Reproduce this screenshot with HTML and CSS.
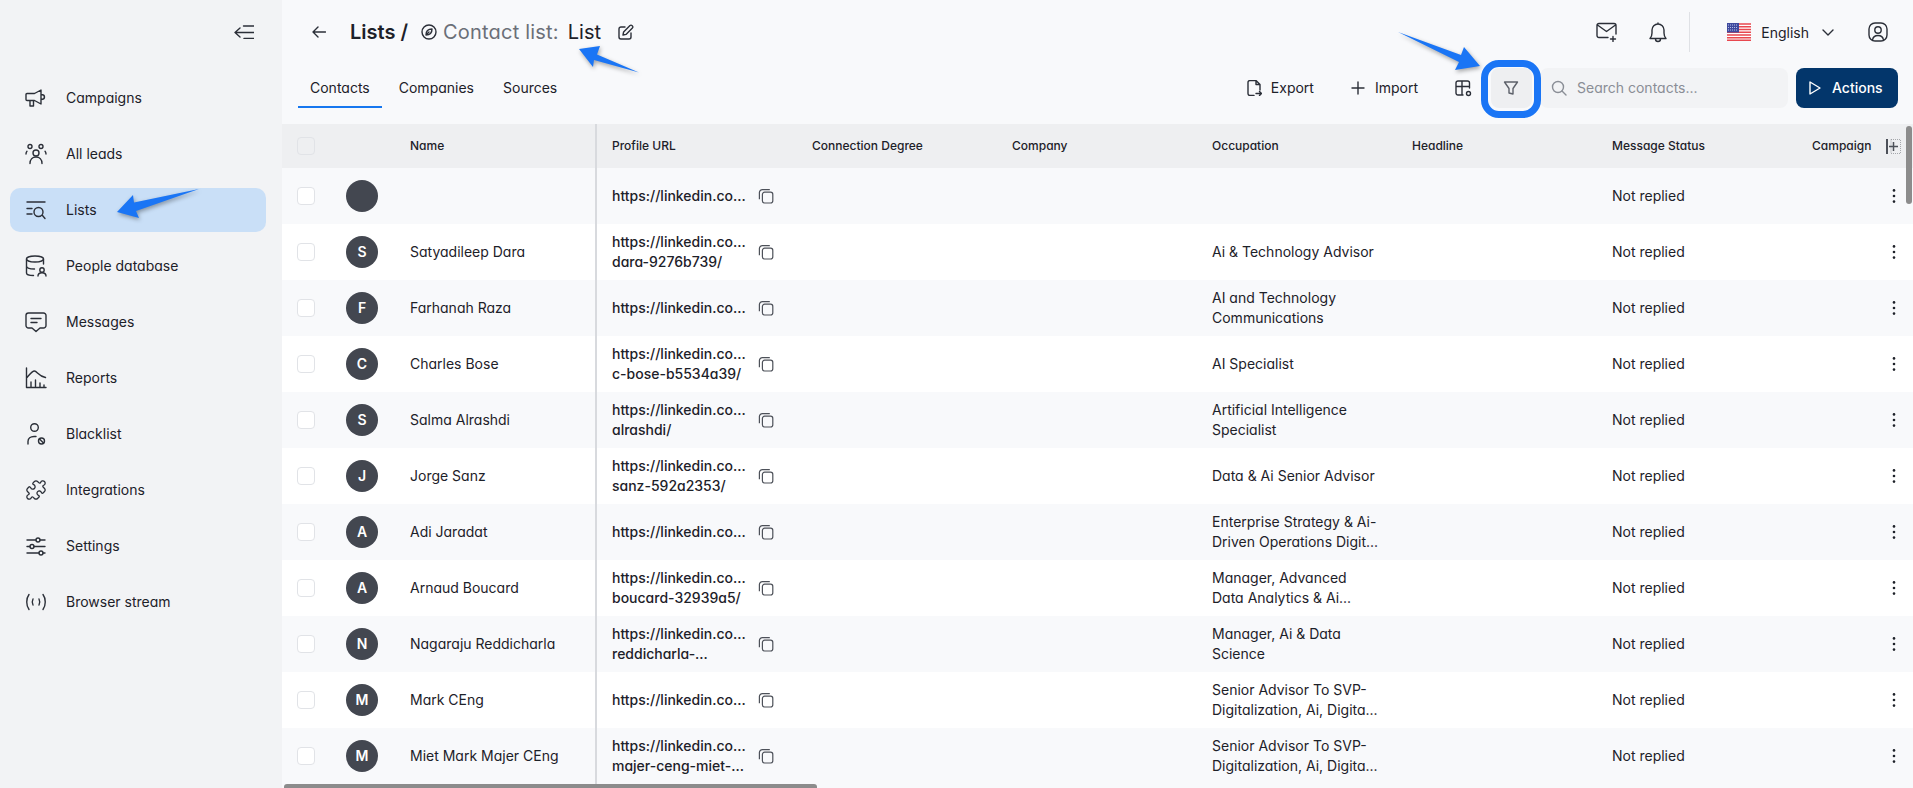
FILE: index.html
```html
<!DOCTYPE html>
<html lang="en">
<head>
  <meta charset="UTF-8" />
  <meta name="viewport" content="width=device-width, initial-scale=1.0"/>
  <title>Contact list</title>
  <link rel="stylesheet" href="styles.css">
</head>
<body>

<!-- Shared icons -->
<svg class="defs" aria-hidden="true">
  <symbol id="i-copy" viewBox="0 0 16 16">
    <rect x="4.4" y="4.2" width="10.4" height="10.8" rx="2.2"/>
    <path d="M11.8 1.6H4.4A3 3 0 0 0 1.4 4.6v6.6"/>
  </symbol>
  <symbol id="i-dots" viewBox="0 0 4 16">
    <circle cx="2" cy="2.4" r="1.3"/>
    <circle cx="2" cy="8" r="1.3"/>
    <circle cx="2" cy="13.6" r="1.3"/>
  </symbol>
</svg>

<div class="app">
  <!-- Sidebar -->
  <aside class="sidebar">
    <div class="collapse">
      <svg class="icon" width="20" height="14" viewBox="0 0 20 14"><path d="M6 3L1 7.5l5 4.500M1 7.500h19M9.500 1H20M10 13.500h10"/></svg>
    </div>
    <nav class="side-nav">
      <a class="side-item" href="#">
        <svg class="icon" width="22" height="22" viewBox="0 0 22 22"><path d="M2 6.500h7.500L16 3v14l-6.500-3.500H2a1 1 0 0 1-1-1v-5a1 1 0 0 1 1-1zM5 13.500V19h3.500v-5.500M16 7.500c2.500 0 3.500 1 3.500 2.500s-1 2.500-3.500 2.500"/></svg>
        <span class="label">Campaigns</span>
      </a>
      <a class="side-item" href="#">
        <svg class="icon" width="22" height="22" viewBox="0 0 22 22"><circle cx="11" cy="10" r="3"/><circle cx="5" cy="3.500" r="2"/><circle cx="16" cy="3.500" r="2"/><path d="M5 20.500c0-4 2.500-6.500 6-6.500s6 2.500 6 6.500M1 11c0-1 .4-2 1-2.800M21 11c0-1-.4-2-1-2.800"/></svg>
        <span class="label">All leads</span>
      </a>
      <a class="side-item active" href="#">
        <svg class="icon" width="22" height="22" viewBox="0 0 22 22"><path d="M2 3h18M2 9.500h5M2 15h5M17.500 16.500L20 19.500"/><circle cx="13.500" cy="13" r="4.500"/></svg>
        <span class="label">Lists</span>
      </a>
      <a class="side-item" href="#">
        <svg class="icon" width="22" height="22" viewBox="0 0 22 22"><ellipse cx="10" cy="4" rx="8.500" ry="3"/><path d="M1.500 4v14c0 1.500 3 2.500 7 2.500M18.500 4v5M1.500 11c0 1.700 3.500 3 8 3"/><circle cx="17" cy="15" r="2.200"/><path d="M13 21c0-2 1.700-3.200 4-3.200s4 1.200 4 3.200"/></svg>
        <span class="label">People database</span>
      </a>
      <a class="side-item" href="#">
        <svg class="icon" width="22" height="22" viewBox="0 0 22 22"><path d="M3.500 2h15A2.500 2.500 0 0 1 21 4.500v10a2.500 2.500 0 0 1-2.500 2.500H15l-4 3.500L7 17H3.500A2.500 2.500 0 0 1 1 14.500v-10A2.500 2.500 0 0 1 3.500 2zM6 7.500h10M6 11.500h6"/></svg>
        <span class="label">Messages</span>
      </a>
      <a class="side-item" href="#">
        <svg class="icon" width="22" height="22" viewBox="0 0 22 22"><path d="M1.500 1v19.500H21M1.500 11C5 7 7 4 9.500 4s4 5 11 6.500M6 20v-5M10.500 20v-7M15 20v-4M19 20v-2"/></svg>
        <span class="label">Reports</span>
      </a>
      <a class="side-item" href="#">
        <svg class="icon" width="22" height="22" viewBox="0 0 22 22"><circle cx="9.500" cy="4.500" r="3.800"/><path d="M3 21v-2.500c0-3 2.500-5 6-5h2"/><circle cx="16.500" cy="18" r="3"/><path d="M14.500 16l4 4"/></svg>
        <span class="label">Blacklist</span>
      </a>
      <a class="side-item" href="#">
        <svg class="icon" width="22" height="22" viewBox="0 0 24 24"><path d="M19.439 7.85c-.049.322.059.648.289.878l1.568 1.568c.47.47.706 1.087.706 1.704s-.235 1.233-.706 1.704l-1.611 1.611a.98.98 0 0 1-.837.276c-.47-.07-.802-.48-.968-.925a2.501 2.501 0 1 0-3.214 3.214c.446.166.855.497.925.968a.979.979 0 0 1-.276.837l-1.61 1.61a2.404 2.404 0 0 1-1.705.707 2.402 2.402 0 0 1-1.704-.706l-1.568-1.568a1.026 1.026 0 0 0-.877-.29c-.493.074-.84.504-1.02.968a2.5 2.5 0 1 1-3.237-3.237c.464-.18.894-.527.967-1.02a1.026 1.026 0 0 0-.289-.877l-1.568-1.568A2.402 2.402 0 0 1 1.998 12c0-.617.236-1.234.706-1.704L4.23 8.77c.24-.24.581-.353.917-.303.515.077.877.528 1.073 1.01a2.5 2.5 0 1 0 3.259-3.259c-.482-.196-.933-.558-1.01-1.073-.05-.336.062-.676.303-.917l1.525-1.525A2.402 2.402 0 0 1 12 1.998c.617 0 1.234.236 1.704.706l1.568 1.568c.23.23.556.338.877.29.493-.074.84-.504 1.02-.968a2.5 2.5 0 1 1 3.237 3.237c-.464.18-.894.527-.967 1.02Z"/></svg>
        <span class="label">Integrations</span>
      </a>
      <a class="side-item" href="#">
        <svg class="icon" width="22" height="22" viewBox="0 0 22 22"><path d="M2 5h9M15 5h5M2 11.500h3M9 11.500h11M2 18h12M18 18h2"/><circle cx="13" cy="5" r="2"/><circle cx="7" cy="11.500" r="2"/><circle cx="16" cy="18" r="2"/></svg>
        <span class="label">Settings</span>
      </a>
      <a class="side-item" href="#">
        <svg class="icon" width="22" height="22" viewBox="0 0 22 22"><path d="M4 3.500c-3 4-3 11 0 15M18 3.500c3 4 3 11 0 15M8 8c-1 2-1 4 0 6M14 8c1 2 1 4 0 6"/></svg>
        <span class="label">Browser stream</span>
      </a>
    </nav>
  </aside>

  <!-- Main -->
  <main class="main">
    <header class="topbar">
      <svg class="icon back" width="14" height="12" viewBox="0 0 14 12"><path d="M6 1L1 6l5 5M1 6h12.500"/></svg>
      <h1 class="crumb">Lists /</h1>
      <svg class="icon compass" width="16" height="16" viewBox="0 0 16 16"><circle cx="8" cy="8" r="7"/><path d="M11 5c-3 0-6 1.500-6 6 3 0 6-1.500 6-6zM5 11l3-3"/></svg>
      <span class="list-label">Contact list:</span>
      <span class="list-name">List</span>
      <svg class="icon edit" width="16" height="16" viewBox="0 0 16 16"><path d="M5 11l.6-3L12 1.600a1.300 1.300 0 0 1 2 0l.4.400a1.300 1.300 0 0 1 0 2L8 10.400zM7 3H3a2 2 0 0 0-2 2v8a2 2 0 0 0 2 2h8a2 2 0 0 0 2-2V9"/></svg>
      <div class="top-actions">
        <svg class="icon" width="22" height="20" viewBox="0 0 22 20"><path d="M12 15.500H3a2 2 0 0 1-2-2v-10a2 2 0 0 1 2-2h15a2 2 0 0 1 2 2V12M1.500 3l9 6.500 9-6.500M17 14.500v5M14.500 17h5"/></svg>
        <svg class="icon bell" width="18" height="21" viewBox="0 0 18 21"><path d="M1 16.500c1.500-1.500 2-3 2-5.500V8a6 6 0 0 1 12 0v3c0 2.500.5 4 2 5.500zM6.500 17a2.500 2.500 0 0 0 5 0M9 2V1"/></svg>
        <span class="top-divider"></span>
        <svg class="flag" width="24" height="18" viewBox="0 0 24 18">
          <rect width="24" height="18" fill="#fff"/>
          <path d="M0 1h24M0 3.800h24M0 6.500h24M0 9.300h24M0 12h24M0 14.800h24M0 17.300h24" stroke="#e8474f" stroke-width="1.400"/>
          <rect width="12" height="9.500" fill="#3f4a9e"/>
          <path d="M1 2h10M1 4.500h10M1 7h10" stroke="#b9c0e6" stroke-width="1" stroke-dasharray="1 1"/>
        </svg>
        <span class="lang">English</span>
        <svg class="icon chevron" width="12" height="7" viewBox="0 0 12 7"><path d="M1 1l5 5 5-5"/></svg>
        <svg class="icon user" width="20" height="20" viewBox="0 0 20 20"><rect x="1" y="1" width="18" height="18" rx="6"/><circle cx="10" cy="8" r="3.200"/><path d="M4.500 18c.5-3 2.500-4.500 5.500-4.500s5 1.500 5.500 4.500"/></svg>
      </div>
    </header>

    <div class="subbar">
      <div class="tabs">
        <a class="tab active" href="#"><span class="label">Contacts</span></a>
        <a class="tab" href="#"><span class="label">Companies</span></a>
        <a class="tab" href="#"><span class="label">Sources</span></a>
      </div>
      <div class="tools">
        <button class="tool export">
          <svg class="icon" width="16" height="16" viewBox="0 0 16 16"><path d="M8 15.500H4a2 2 0 0 1-2-2v-11a2 2 0 0 1 2-2h6l4 4V10M10 .5V4.500h4M10 13.500h5.500M13.500 11.500l2 2-2 2"/></svg>
          <span class="label">Export</span>
        </button>
        <button class="tool">
          <svg class="icon" width="16" height="16" viewBox="0 0 16 16"><path d="M8 2v12M2 8h12"/></svg>
          <span class="label">Import</span>
        </button>
        <button class="tool-icon">
          <svg class="icon" width="17" height="17" viewBox="0 0 17 17"><path d="M8 15H3a2 2 0 0 1-2-2V3a2 2 0 0 1 2-2h9.500a2 2 0 0 1 2 2v5M1 6.500h13.500M7 1v14"/><circle cx="13.500" cy="13.500" r="2"/></svg>
        </button>
        <button class="filter-btn">
          <svg class="icon" width="16" height="16" viewBox="0 0 16 16"><path d="M1.500 2h13L10 8.500V14l-4-1V8.500z"/></svg>
        </button>
        <div class="search">
          <svg class="icon" width="16" height="16" viewBox="0 0 16 16"><circle cx="7" cy="7" r="5.500"/><path d="M11 11l4 4"/></svg>
          <span class="label placeholder">Search contacts...</span>
        </div>
        <button class="actions-btn">
          <svg class="icon" width="12" height="14" viewBox="0 0 12 14"><path d="M1 1l10 6-10 6z"/></svg>
          <span class="label">Actions</span>
        </button>
      </div>
    </div>

    <!-- Contacts table -->
    <section class="table">
      <div class="row head">
        <div class="cell"><span class="check"></span></div>
        <div class="cell"></div>
        <div class="cell">Name</div>
        <div class="cell url-cell">Profile URL</div>
        <div class="cell">Connection Degree</div>
        <div class="cell">Company</div>
        <div class="cell">Occupation</div>
        <div class="cell">Headline</div>
        <div class="cell">Message Status</div>
        <div class="cell">Campaign
          <svg class="col-add" width="15" height="15" viewBox="0 0 15 15"><path d="M1 0v15" stroke-width="2"/><path d="M3 7.500h9M7.500 3v9" stroke-width="1.500"/><rect x="5" y=".5" width="9.500" height="14" stroke-width="1" stroke-dasharray="1 1" opacity=".45"/></svg>
        </div>
      </div>

      <div class="row">
        <div class="cell"><span class="check"></span></div>
        <div class="cell"><span class="avatar"></span></div>
        <div class="cell"></div>
        <div class="cell url-cell"><span class="url">https://linkedin.co...</span><svg class="copy"><use href="#i-copy"/></svg></div>
        <div class="cell"></div>
        <div class="cell"></div>
        <div class="cell"></div>
        <div class="cell"></div>
        <div class="cell">Not replied</div>
        <div class="cell"><svg class="dots"><use href="#i-dots"/></svg></div>
      </div>
      <div class="row">
        <div class="cell"><span class="check"></span></div>
        <div class="cell"><span class="avatar">S</span></div>
        <div class="cell">Satyadileep Dara</div>
        <div class="cell url-cell"><span class="url">https://linkedin.co...<br>dara-9276b739/</span><svg class="copy"><use href="#i-copy"/></svg></div>
        <div class="cell"></div>
        <div class="cell"></div>
        <div class="cell">Ai &amp; Technology Advisor</div>
        <div class="cell"></div>
        <div class="cell">Not replied</div>
        <div class="cell"><svg class="dots"><use href="#i-dots"/></svg></div>
      </div>
      <div class="row">
        <div class="cell"><span class="check"></span></div>
        <div class="cell"><span class="avatar">F</span></div>
        <div class="cell">Farhanah Raza</div>
        <div class="cell url-cell"><span class="url">https://linkedin.co...</span><svg class="copy"><use href="#i-copy"/></svg></div>
        <div class="cell"></div>
        <div class="cell"></div>
        <div class="cell">AI and Technology<br>Communications</div>
        <div class="cell"></div>
        <div class="cell">Not replied</div>
        <div class="cell"><svg class="dots"><use href="#i-dots"/></svg></div>
      </div>
      <div class="row">
        <div class="cell"><span class="check"></span></div>
        <div class="cell"><span class="avatar">C</span></div>
        <div class="cell">Charles Bose</div>
        <div class="cell url-cell"><span class="url">https://linkedin.co...<br>c-bose-b5534a39/</span><svg class="copy"><use href="#i-copy"/></svg></div>
        <div class="cell"></div>
        <div class="cell"></div>
        <div class="cell">AI Specialist</div>
        <div class="cell"></div>
        <div class="cell">Not replied</div>
        <div class="cell"><svg class="dots"><use href="#i-dots"/></svg></div>
      </div>
      <div class="row">
        <div class="cell"><span class="check"></span></div>
        <div class="cell"><span class="avatar">S</span></div>
        <div class="cell">Salma Alrashdi</div>
        <div class="cell url-cell"><span class="url">https://linkedin.co...<br>alrashdi/</span><svg class="copy"><use href="#i-copy"/></svg></div>
        <div class="cell"></div>
        <div class="cell"></div>
        <div class="cell">Artificial Intelligence<br>Specialist</div>
        <div class="cell"></div>
        <div class="cell">Not replied</div>
        <div class="cell"><svg class="dots"><use href="#i-dots"/></svg></div>
      </div>
      <div class="row">
        <div class="cell"><span class="check"></span></div>
        <div class="cell"><span class="avatar">J</span></div>
        <div class="cell">Jorge Sanz</div>
        <div class="cell url-cell"><span class="url">https://linkedin.co...<br>sanz-592a2353/</span><svg class="copy"><use href="#i-copy"/></svg></div>
        <div class="cell"></div>
        <div class="cell"></div>
        <div class="cell">Data &amp; Ai Senior Advisor</div>
        <div class="cell"></div>
        <div class="cell">Not replied</div>
        <div class="cell"><svg class="dots"><use href="#i-dots"/></svg></div>
      </div>
      <div class="row">
        <div class="cell"><span class="check"></span></div>
        <div class="cell"><span class="avatar">A</span></div>
        <div class="cell">Adi Jaradat</div>
        <div class="cell url-cell"><span class="url">https://linkedin.co...</span><svg class="copy"><use href="#i-copy"/></svg></div>
        <div class="cell"></div>
        <div class="cell"></div>
        <div class="cell">Enterprise Strategy &amp; Ai-<br>Driven Operations Digit...</div>
        <div class="cell"></div>
        <div class="cell">Not replied</div>
        <div class="cell"><svg class="dots"><use href="#i-dots"/></svg></div>
      </div>
      <div class="row">
        <div class="cell"><span class="check"></span></div>
        <div class="cell"><span class="avatar">A</span></div>
        <div class="cell">Arnaud Boucard</div>
        <div class="cell url-cell"><span class="url">https://linkedin.co...<br>boucard-32939a5/</span><svg class="copy"><use href="#i-copy"/></svg></div>
        <div class="cell"></div>
        <div class="cell"></div>
        <div class="cell">Manager, Advanced<br>Data Analytics &amp; Ai...</div>
        <div class="cell"></div>
        <div class="cell">Not replied</div>
        <div class="cell"><svg class="dots"><use href="#i-dots"/></svg></div>
      </div>
      <div class="row">
        <div class="cell"><span class="check"></span></div>
        <div class="cell"><span class="avatar">N</span></div>
        <div class="cell">Nagaraju Reddicharla</div>
        <div class="cell url-cell"><span class="url">https://linkedin.co...<br>reddicharla-...</span><svg class="copy"><use href="#i-copy"/></svg></div>
        <div class="cell"></div>
        <div class="cell"></div>
        <div class="cell">Manager, Ai &amp; Data<br>Science</div>
        <div class="cell"></div>
        <div class="cell">Not replied</div>
        <div class="cell"><svg class="dots"><use href="#i-dots"/></svg></div>
      </div>
      <div class="row">
        <div class="cell"><span class="check"></span></div>
        <div class="cell"><span class="avatar">M</span></div>
        <div class="cell">Mark CEng</div>
        <div class="cell url-cell"><span class="url">https://linkedin.co...</span><svg class="copy"><use href="#i-copy"/></svg></div>
        <div class="cell"></div>
        <div class="cell"></div>
        <div class="cell">Senior Advisor To SVP-<br>Digitalization, Ai, Digita...</div>
        <div class="cell"></div>
        <div class="cell">Not replied</div>
        <div class="cell"><svg class="dots"><use href="#i-dots"/></svg></div>
      </div>
      <div class="row">
        <div class="cell"><span class="check"></span></div>
        <div class="cell"><span class="avatar">M</span></div>
        <div class="cell">Miet Mark Majer CEng</div>
        <div class="cell url-cell"><span class="url">https://linkedin.co...<br>majer-ceng-miet-...</span><svg class="copy"><use href="#i-copy"/></svg></div>
        <div class="cell"></div>
        <div class="cell"></div>
        <div class="cell">Senior Advisor To SVP-<br>Digitalization, Ai, Digita...</div>
        <div class="cell"></div>
        <div class="cell">Not replied</div>
        <div class="cell"><svg class="dots"><use href="#i-dots"/></svg></div>
      </div>

      <div class="scroll-v"></div>
      <div class="scroll-h"></div>
    </section>
  </main>
</div>

<!-- Annotation arrows drawn over the screenshot -->
<svg class="arrows" width="1913" height="788" viewBox="0 0 1913 788">
  <path d="M199 189L134 202.500 133 195 117 212 139 218 136 211z"/>
  <path d="M579 49L600 46 597 54.500 639 72.500 594 60 593 67z"/>
  <path d="M1398 32L1461 55 1464 47 1480 66 1455 70 1459 62z"/>
</svg>

</body>
</html>
```

FILE: styles.css
```css
* {
  box-sizing: border-box;
}

body {
  margin: 0;
  height: 100vh;
  overflow: hidden;
  font-family: "Inter", sans-serif;
  font-feature-settings: "cv11";
  font-size: 14px;
  color: #1d2129;
  background: #f8f9fb;
}

a {
  color: inherit;
  text-decoration: none;
}

button {
  font: inherit;
  font-feature-settings: inherit;
  color: inherit;
  background: none;
  border: none;
  padding: 0;
}

.defs {
  position: absolute;
  width: 0;
  height: 0;
}

.icon {
  flex: none;
  fill: none;
  stroke: #2b2f38;
  stroke-width: 1.4;
  stroke-linecap: round;
  stroke-linejoin: round;
}

/* text sits a hair low in flex rows, pull it up to the icons */
.label {
  margin-top: -1px;
}

.app {
  display: flex;
  height: 100%;
}

/* Sidebar */
.sidebar {
  width: 282px;
  flex: none;
  background: #f2f3f5;
}

.collapse {
  display: flex;
  justify-content: flex-end;
  height: 76px;
  padding: 25px 28px 0 0;
}

.side-nav {
  display: flex;
  flex-direction: column;
  gap: 12px;
  padding: 0 16px 0 10px;
}

.side-item {
  display: flex;
  align-items: center;
  gap: 19px;
  height: 44px;
  padding-left: 15px;
  border-radius: 10px;
}

.side-item.active {
  background: #c9dff7;
}

/* Top bar */
.main {
  flex: 1;
  min-width: 0;
  position: relative;
  display: flex;
  flex-direction: column;
}

.topbar {
  display: flex;
  align-items: center;
  height: 64px;
  padding: 0 25px 0 30px;
}

.crumb {
  margin: 0 0 0 24px;
  font-size: 20px;
  font-weight: 600;
  line-height: 1;
}

.compass {
  margin-left: 13px;
}

.list-label {
  margin-left: 6px;
  font-size: 20px;
  letter-spacing: 0.2px;
  color: #6b6f78;
}

.list-name {
  margin-left: 9px;
  font-size: 20px;
}

.edit {
  margin-left: 17px;
}

.top-actions {
  display: flex;
  align-items: center;
  margin-left: auto;
}

.bell {
  margin-left: 31px;
}

.top-divider {
  width: 1px;
  height: 40px;
  margin: 0 37px 0 22px;
  background: #dfe1e5;
}

.flag {
  flex: none;
}

.lang {
  margin-left: 10px;
}

.chevron {
  margin-left: 13px;
}

.user {
  margin-left: 34px;
}

/* Tabs and tools */
.subbar {
  display: flex;
  justify-content: space-between;
  height: 60px;
  padding: 4px 15px 0 16px;
}

.tabs {
  display: flex;
  gap: 5px;
  height: 40px;
}

.tab {
  display: flex;
  align-items: center;
  padding: 0 12px;
}

.tab.active {
  border-bottom: 2px solid #1677ef;
  padding-top: 2px;
}

.tools {
  display: flex;
  align-items: center;
  height: 40px;
}

.tool {
  display: flex;
  align-items: center;
  gap: 9px;
  height: 40px;
  padding: 0 12px;
}

.export {
  margin-right: 12px;
}

.tool-icon {
  display: flex;
  align-items: center;
  margin: 0 19px 0 25px;
}

.filter-btn {
  position: relative;
  display: flex;
  align-items: center;
  justify-content: center;
  width: 41px;
  height: 40px;
  padding-right: 2px;
  border-radius: 8px;
  background: #eeeff1;
}

.filter-btn .icon {
  stroke: #5d616a;
}

/* blue ring of the annotation */
.filter-btn::after {
  content: '';
  position: absolute;
  top: -8px;
  bottom: -10px;
  left: -10px;
  right: -9px;
  border: 7px solid #1a75f5;
  border-radius: 18px;
}

.search {
  display: flex;
  align-items: center;
  gap: 10px;
  width: 248px;
  height: 40px;
  margin: 0 8px;
  padding-left: 11px;
  border-radius: 8px;
  background: #f2f3f5;
}

.search .icon {
  stroke: #8a8e96;
}

.placeholder {
  color: #8a8e96;
}

.actions-btn {
  display: flex;
  align-items: center;
  gap: 11px;
  width: 102px;
  height: 40px;
  padding-left: 13px;
  border-radius: 8px;
  background: #03366b;
  color: #fff;
  font-weight: 500;
}

.actions-btn .icon {
  stroke: #fff;
}

/* Table */
.table {
  flex: 1;
  overflow: hidden;
}

.row {
  display: grid;
  grid-template-columns: 64px 64px 185px 217px 200px 200px 200px 200px 200px 101px;
  height: 56px;
}

.row:nth-child(odd) {
  background: #fff;
}

.row:nth-child(even) {
  background: #f8f9fb;
}

.row.head {
  height: 44px;
  background: #eeeff1;
  font-size: 12px;
  font-weight: 500;
}

.cell {
  display: flex;
  align-items: center;
  line-height: 20px;
  white-space: nowrap;
}

.cell:first-child {
  padding-left: 15px;
}

.url-cell {
  padding-left: 15px;
  border-left: 2px solid #d8dade;
  gap: 12px;
  font-weight: 500;
}

.url {
  width: 134px;
}

.check {
  display: block;
  width: 18px;
  height: 18px;
  border: 1px solid #e1e3e7;
  border-radius: 4px;
  background: #fff;
}

.head .check {
  background: #eeeff1;
}

.avatar {
  display: flex;
  align-items: center;
  justify-content: center;
  width: 32px;
  height: 32px;
  border-radius: 50%;
  background: #434750;
  color: #fff;
  font-weight: 600;
}

.copy {
  flex: none;
  width: 16px;
  height: 16px;
  fill: none;
  stroke: #4d5159;
  stroke-width: 1.2;
}

.dots {
  width: 4px;
  height: 16px;
  margin-left: 80px;
  fill: #1d2129;
}

.col-add {
  flex: none;
  margin-left: 15px;
  fill: none;
  stroke: #4d5159;
}

.scroll-v {
  position: absolute;
  top: 126px;
  right: 1px;
  width: 6px;
  height: 78px;
  border-radius: 3px;
  background: #8c8c8c;
}

.scroll-h {
  position: absolute;
  left: 2px;
  bottom: 0;
  width: 533px;
  height: 4px;
  border-radius: 3px 3px 0 0;
  background: #8c8c8c;
}

/* Annotation arrows */
.arrows {
  position: absolute;
  top: 0;
  left: 0;
  fill: #1a75f5;
  filter: drop-shadow(1px 2px 2px rgba(0, 0, 0, 0.35));
  pointer-events: none;
}
```
